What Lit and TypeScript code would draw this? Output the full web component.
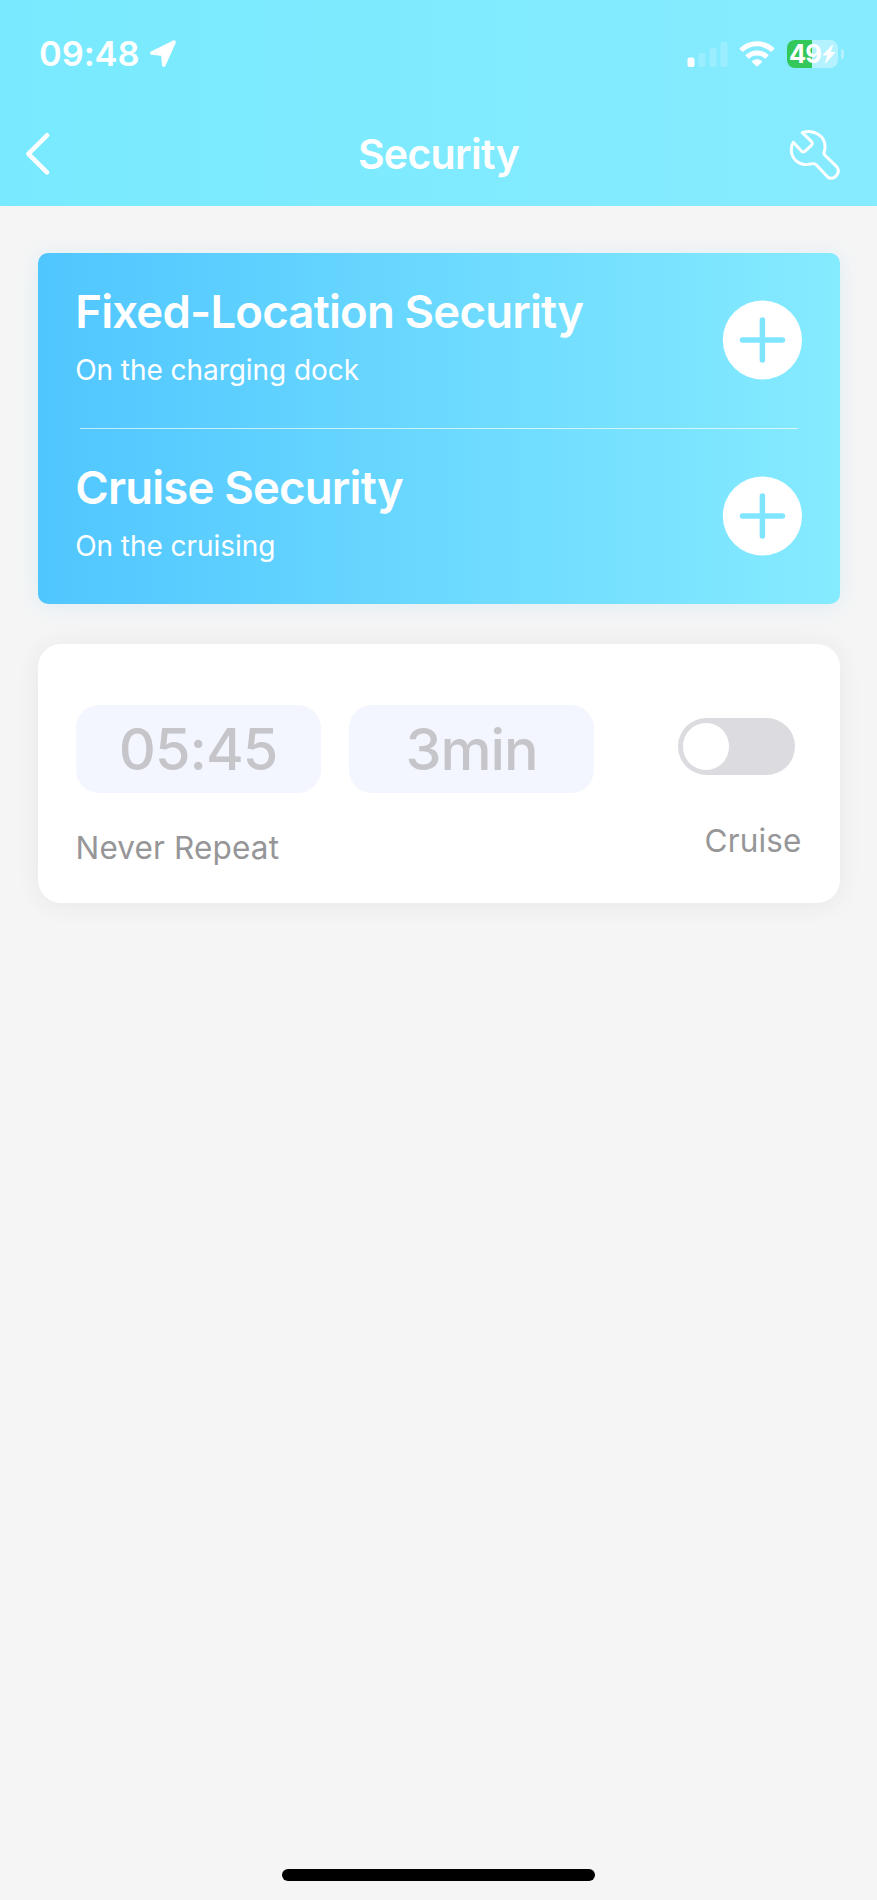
import { LitElement, html, css } from "lit";
import { customElement, property, state } from "lit/decorators.js";

@customElement("status-bar")
class StatusBar extends LitElement {
  static styles = css`
    :host {
      display: flex;
      align-items: center;
      height: 108px;
      padding: 0 33px 0 39px;
      box-sizing: border-box;
      color: #fff;
    }
    .time {
      font-size: 34.5px;
      font-weight: 600;
      line-height: 44px;
      letter-spacing: -0.1px;
    }
    svg {
      display: block;
      flex: none;
    }
    .arrow {
      margin-left: 10px;
    }
    .signal {
      margin-left: auto;
    }
    .wifi {
      margin-left: 11px;
    }
    .battery {
      display: flex;
      align-items: center;
      justify-content: center;
      gap: 1px;
      width: 51px;
      height: 28px;
      margin-left: 12px;
      border-radius: 8px;
      background: linear-gradient(90deg, #34c759 50%, #b4f2ff 50%);
    }
    .level {
      font-size: 25.5px;
      font-weight: 700;
      line-height: 28px;
      letter-spacing: -1px;
    }
    .nub {
      width: 3px;
      height: 10px;
      margin-left: 3px;
      border-radius: 0 4px 4px 0;
      background: #b4f2ff;
    }
  `;

  render() {
    return html`
      <span class="time">09:48</span>
      <svg class="arrow" width="28" height="28" viewBox="0 0 28 28">
        <path
          d="M25 2.2 L14.8 25 L13.9 14.2 L2.8 13 Z"
          fill="#fff"
          stroke="#fff"
          stroke-width="3.6"
          stroke-linejoin="round"
        />
      </svg>
      <svg class="signal" width="41" height="26" viewBox="0 0 41 26">
        <rect x="0.5" y="16.5" width="7" height="9.5" rx="2" fill="#fff" />
        <g fill="#fff" opacity="0.18">
          <rect x="11.5" y="12" width="7" height="14" rx="2" />
          <rect x="22.5" y="6.5" width="7" height="19.5" rx="2" />
          <rect x="33.5" y="1" width="7" height="25" rx="2" />
        </g>
      </svg>
      <svg class="wifi" width="36" height="26" viewBox="0 0 36 26">
        <g fill="none" stroke="#fff" stroke-width="5">
          <path d="M2 9.3 A23 23 0 0 1 34 9.3" />
          <path d="M8 16 A14.2 14.2 0 0 1 28 16" />
        </g>
        <path d="M13 20.6 Q18 16.8 23 20.6 L18 25.2 Z" fill="#fff" stroke="#fff" stroke-linejoin="round" />
      </svg>
      <div class="battery">
        <span class="level">49</span>
        <svg width="14" height="20" viewBox="0 0 14 20">
          <path
            d="M10.6 1 L1.2 11 H6 L3.4 19 L12.8 8.6 H8 Z"
            fill="#fff"
            stroke="#fff"
            stroke-width="1"
            stroke-linejoin="round"
          />
        </svg>
      </div>
      <span class="nub"></span>
    `;
  }
}

@customElement("mode-row")
class ModeRow extends LitElement {
  @property() heading = "";
  @property() note = "";

  static styles = css`
    :host {
      display: flex;
      justify-content: space-between;
      align-items: center;
      height: 174.5px;
      padding: 0 38px 0 37.7px;
      box-sizing: border-box;
      color: #fff;
    }
    .heading {
      font-size: 45.5px;
      font-weight: 600;
      line-height: 56px;
      letter-spacing: -0.81px;
    }
    .note {
      margin-top: 13.5px;
      font-size: 28px;
      line-height: 34px;
      letter-spacing: -0.05px;
      padding-bottom: 10px;
    }
    svg {
      display: block;
      flex: none;
    }
  `;

  render() {
    return html`
      <div>
        <div class="heading">${this.heading}</div>
        <div class="note">${this.note}</div>
      </div>
      <svg width="80" height="80" viewBox="0 0 80 80">
        <circle cx="40.4" cy="40" r="39.6" fill="#fff" />
        <path d="M40.4 20 V60 M20.4 40 H60.4" stroke="#80e6ff" stroke-width="5.5" stroke-linecap="round" />
      </svg>
    `;
  }
}

@customElement("app-root")
class AppRoot extends LitElement {
  @state() private enabled = false;

  static styles = css`
    :host {
      display: flex;
      flex-direction: column;
      height: 1900px;
      background: #f5f5f5;
      font-family: Inter, "Liberation Sans", sans-serif;
    }
    header {
      height: 206px;
      flex: none;
      background: linear-gradient(90deg, #78eaff, #87ebff);
    }
    .nav {
      display: grid;
      grid-template-columns: 1fr auto 1fr;
      align-items: center;
      height: 92px;
      padding: 0 37px 0 24px;
      color: #fff;
    }
    .nav svg {
      display: block;
    }
    .tool {
      justify-self: end;
    }
    h1 {
      margin: 0;
      padding-left: 13px;
      font-size: 41px;
      font-weight: 600;
      line-height: 50px;
      letter-spacing: -0.7px;
    }
    main {
      flex: 1;
      display: flex;
      flex-direction: column;
      gap: 40px;
      padding: 47px 37.5px 0;
    }
    .modes {
      border-radius: 10px;
      background: linear-gradient(90deg, #50c6ff, #6bd9ff 50%, #85ebff);
      box-shadow: 0 2px 22px rgba(80, 190, 255, 0.14);
    }
    .divider {
      height: 1.5px;
      margin: 0 42px;
      background: rgba(255, 255, 255, 0.65);
    }
    .schedule {
      display: flex;
      justify-content: space-between;
      height: 259.5px;
      padding: 61px 38px 0;
      box-sizing: border-box;
      border-radius: 23px;
      background: #fff;
      box-shadow: 0 2px 24px rgba(60, 60, 90, 0.07);
      color: #969698;
      font-size: 31.5px;
      line-height: 38px;
      letter-spacing: 0.15px;
    }
    .chips {
      display: flex;
      gap: 28.5px;
    }
    .chip {
      width: 245px;
      height: 88.5px;
      border-radius: 23px;
      background: #f3f6fe;
      color: #c6c5ca;
      font-size: 57.5px;
      font-weight: 500;
      line-height: 89.5px;
      letter-spacing: -1px;
      text-align: center;
    }
    .repeat {
      margin-top: 36px;
    }
    .side {
      display: flex;
      flex-direction: column;
      align-items: flex-end;
      padding-top: 13.5px;
    }
    .toggle {
      width: 117px;
      height: 56.5px;
      margin-right: 7px;
      padding: 5px;
      box-sizing: border-box;
      border-radius: 29px;
      background: #dcdbe0;
    }
    .toggle.on {
      background: #50c6ff;
    }
    .toggle.on .knob {
      margin-left: auto;
    }
    .knob {
      display: block;
      width: 46.5px;
      height: 46.5px;
      border-radius: 50%;
      background: #fff;
    }
    .kind {
      margin-top: 47px;
    }
    .home {
      align-self: center;
      width: 313.5px;
      height: 11.7px;
      margin-bottom: 19px;
      border-radius: 6px;
      background: #000;
    }
  `;

  render() {
    return html`
      <header>
        <status-bar></status-bar>
        <div class="nav">
          <svg width="28" height="44" viewBox="0 0 28 44">
            <path
              d="M23 3.3 L4.4 21.8 L23 40.3"
              fill="none"
              stroke="#fff"
              stroke-width="4.6"
              stroke-linecap="round"
              stroke-linejoin="round"
            />
          </svg>
          <h1>Security</h1>
          <svg class="tool" width="51" height="51" viewBox="447 387 153 153">
            <path
              d="M487 398 C520 386 557 408 555 442 C556 452 548 459 554 465 L590 500 C604 517 583 543 564 532 L527 493 Q523 489 505 493 C475 497 453 475 454 448 Q454 437 460 427 L482 451 Q489 460 497 452 L514 436 Q520 430 514 424 Z"
              fill="none"
              stroke="#fff"
              stroke-width="9"
              stroke-linejoin="round"
            />
          </svg>
        </div>
      </header>
      <main>
        <section class="modes">
          <mode-row heading="Fixed-Location Security" note="On the charging dock"></mode-row>
          <div class="divider"></div>
          <mode-row heading="Cruise Security" note="On the cruising"></mode-row>
        </section>
        <section class="schedule">
          <div>
            <div class="chips">
              <div class="chip">05:45</div>
              <div class="chip">3min</div>
            </div>
            <div class="repeat">Never Repeat</div>
          </div>
          <div class="side">
            <div class="toggle ${this.enabled ? "on" : ""}" @click=${() => (this.enabled = !this.enabled)}>
              <span class="knob"></span>
            </div>
            <div class="kind">Cruise</div>
          </div>
        </section>
      </main>
      <div class="home"></div>
    `;
  }
}
